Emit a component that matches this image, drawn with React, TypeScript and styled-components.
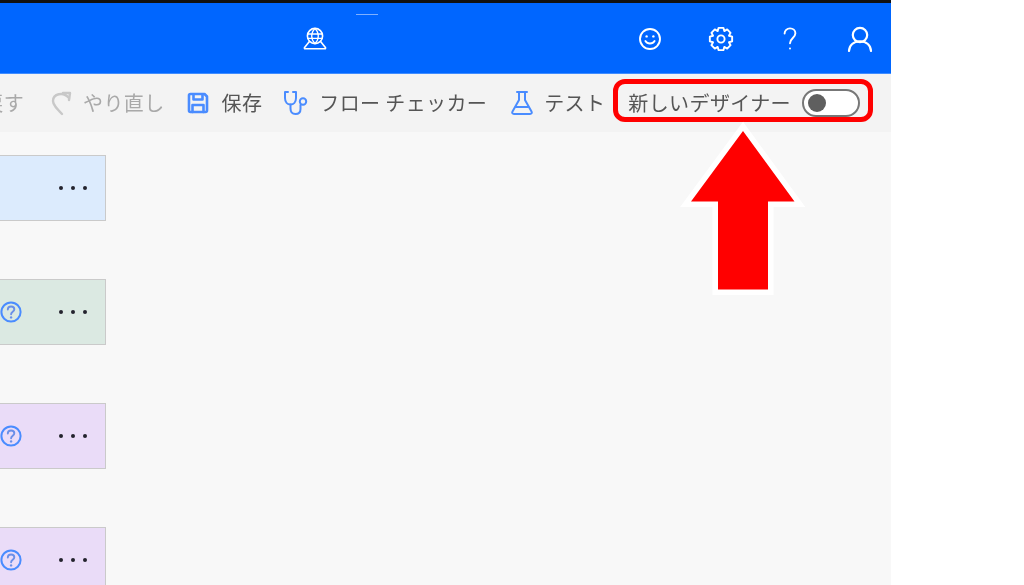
import React from "react";
import styled, { createGlobalStyle } from "styled-components";

const Global = createGlobalStyle`
  html, body { margin: 0; padding: 0; background: #fff; }
  body { font-family: "Noto Sans CJK JP", "Noto Sans", sans-serif; }
`;

const Stage = styled.div`
  position: relative;
  width: 1024px;
  height: 585px;
  overflow: hidden;
  background: #fff;
`;

const Frame = styled.div`
  width: 891px;
  height: 585px;
  display: flex;
  flex-direction: column;
  overflow: hidden;
  background: #f8f8f8;
  filter: blur(0.35px);
`;

const TopEdge = styled.div`
  height: 3px;
  background: #111;
  flex: none;
`;

const Header = styled.header`
  height: 70px;
  flex: none;
  background: #0066ff;
  border-bottom: 1px solid #3f8cff;
  display: grid;
  grid-template-columns: 302px 26px 309px 26px 45px 26px 43px 26px 44px 26px 1fr;
  align-items: center;
  color: #fff;
  position: relative;
`;

const HeaderIcon = styled.svg<{ $col: number }>`
  grid-column: ${(p) => p.$col};
  width: 26px;
  height: 26px;
  fill: none;
  stroke: #fff;
  stroke-width: 1.9;
  stroke-linecap: round;
  stroke-linejoin: round;
  margin-top: 2px;
`;

const TabMark = styled.span`
  position: absolute;
  left: 356px;
  top: 11px;
  width: 22px;
  height: 1px;
  background: #7fb0ff;
`;

const Toolbar = styled.div`
  height: 58px;
  flex: none;
  background: #f3f3f3;
  display: flex;
  justify-content: flex-end;
  align-items: center;
  padding-right: 31px;
  white-space: nowrap;
`;

const Action = styled.div<{ $gap: number; $after: number }>`
  display: flex;
  flex: none;
  align-items: center;
  gap: ${(p) => p.$gap}px;
  margin-right: ${(p) => p.$after}px;
`;

const Label = styled.span<{ $muted?: boolean }>`
  font-size: 20px;
  line-height: 28px;
  letter-spacing: 0.38px;
  color: ${(p) => (p.$muted ? "#a9a9a9" : "#555")};
`;

const ToolIcon = styled.svg<{ $w: number; $h: number; $stroke?: string; $sw?: number }>`
  flex: none;
  width: ${(p) => p.$w}px;
  height: ${(p) => p.$h}px;
  fill: none;
  stroke: ${(p) => p.$stroke ?? "#4a8cff"};
  stroke-width: ${(p) => p.$sw ?? 2};
  stroke-linecap: round;
  stroke-linejoin: round;
`;

const Toggle = styled.span`
  flex: none;
  box-sizing: border-box;
  width: 58px;
  height: 28px;
  border: 2px solid #777;
  border-radius: 14px;
  background: #fff;
  display: flex;
  align-items: center;
  padding-left: 4px;
`;

const Knob = styled.span`
  width: 18px;
  height: 18px;
  border-radius: 50%;
  background: #5f5f5f;
`;

const Canvas = styled.main`
  flex: 1;
  display: flex;
  flex-direction: column;
  gap: 58px;
  padding-top: 23px;
`;

const Card = styled.div<{ $bg: string }>`
  flex: none;
  box-sizing: border-box;
  width: 106px;
  height: 66px;
  background: ${(p) => p.$bg};
  border: 1px solid #cacaca;
  border-left: none;
  display: flex;
  align-items: center;
  justify-content: flex-end;
  padding-right: 18px;
`;

const HelpIcon = styled.svg`
  width: 22px;
  height: 22px;
  margin-right: 37px;
  fill: none;
  flex: none;
`;

const Dots = styled.span`
  display: flex;
  gap: 8px;
`;

const Dot = styled.i`
  width: 4px;
  height: 4px;
  border-radius: 50%;
  background: #23232d;
`;

const Highlight = styled.div`
  position: absolute;
  left: 613px;
  top: 79px;
  width: 260px;
  height: 43px;
  box-sizing: border-box;
  border: 5.5px solid #ff0000;
  border-radius: 12px;
`;

const Arrow = styled.svg`
  position: absolute;
  left: 675px;
  top: 115px;
  width: 140px;
  height: 190px;
`;

const gearPath = (() => {
  const teeth = 8;
  const cx = 13;
  const cy = 13;
  const outer = 11.4;
  const inner = 8.6;
  const pts: string[] = [];
  for (let i = 0; i < teeth; i++) {
    const a = (i / teeth) * Math.PI * 2;
    const step = (Math.PI * 2) / teeth;
    const offsets: [number, number][] = [
      [inner, -0.5],
      [outer, -0.27],
      [outer, 0.27],
      [inner, 0.5],
    ];
    offsets.forEach(([r, k]) => {
      const t = a + k * step;
      pts.push(`${(cx + r * Math.cos(t)).toFixed(2)} ${(cy + r * Math.sin(t)).toFixed(2)}`);
    });
  }
  return `M${pts.join("L")}Z`;
})();

const Help = () => (
  <HelpIcon viewBox="0 0 22 22">
    <circle cx="11" cy="11" r="9.6" stroke="#4a8cff" strokeWidth="2" />
    <path d="M7.800 8.600c0-2 1.500-3.100 3.300-3.100s3.200 1.100 3.200 2.800c0 2.500-3.200 2.400-3.200 5" stroke="#6a8fe8" strokeWidth="1.900" strokeLinecap="round" />
    <circle cx="11.100" cy="16.400" r="1.200" fill="#6a8fe8" />
  </HelpIcon>
);

const More = () => (
  <Dots>
    <Dot />
    <Dot />
    <Dot />
  </Dots>
);

export default function App() {
  return (
    <Stage>
      <Global />
      <Frame>
        <TopEdge />
        <Header>
          <TabMark />
          <HeaderIcon $col={2} viewBox="0 0 26 26">
            <circle cx="13" cy="10" r="7.600" strokeWidth="1.600" />
            <path d="M5.600 8h14.800M5.600 12.400h14.800M13 2.400c-4.400 4.600-4.400 10.600 0 15.200M13 2.400c4.400 4.600 4.400 10.600 0 15.200" strokeWidth="1.300" />
            <path d="M7.400 15.400 2.600 21.500c-.4.600-.2 1.200.6 1.200h19.600c.8 0 1-.6.600-1.200l-4.800-6.100" strokeWidth="1.600" />
          </HeaderIcon>
          <HeaderIcon $col={4} viewBox="0 0 26 26">
            <circle cx="13" cy="13" r="10" />
            <circle cx="9.600" cy="10.400" r="1.200" fill="#fff" stroke="none" />
            <circle cx="16.400" cy="10.400" r="1.200" fill="#fff" stroke="none" />
            <path d="M8.400 15c2 3.400 7.200 3.400 9.200 0" />
          </HeaderIcon>
          <HeaderIcon $col={6} viewBox="0 0 26 26">
            <circle cx="13" cy="13" r="3.600" />
            <path d={gearPath} />
          </HeaderIcon>
          <HeaderIcon $col={8} viewBox="0 0 26 26">
            <path d="M7.600 7.600c0-3 2.400-5.200 5.400-5.200s5.400 2 5.400 4.900c0 4.500-5.400 5-5.400 10" />
            <circle cx="13" cy="22.600" r="1" fill="#fff" stroke="none" />
          </HeaderIcon>
          <HeaderIcon $col={10} viewBox="0 0 26 26">
            <circle cx="13" cy="9" r="7.200" strokeWidth="2.200" />
            <path d="M2 25c.4-5.800 4.500-9.600 11-9.600S23.600 19.200 24 25" strokeWidth="2.200" />
          </HeaderIcon>
        </Header>
        <Toolbar>
          <Action $gap={0} $after={26}>
            <Label $muted>戻す</Label>
          </Action>
          <Action $gap={11} $after={22}>
            <ToolIcon $w={22} $h={26} $stroke="#c8c8c8" $sw={2.4} viewBox="0 0 22 26">
              <path d="M19 8C13 1 3 4 3 11c0 4 4 8 9 13" />
              <path d="M13 3h7l-1 7" />
            </ToolIcon>
            <Label $muted>やり直し</Label>
          </Action>
          <Action $gap={13} $after={21}>
            <ToolIcon $w={22} $h={22} $sw={2.6} viewBox="0 0 22 22">
              <path d="M2 3.500A1.500 1.500 0 0 1 3.500 2h14L20 4.500v14a1.500 1.500 0 0 1-1.500 1.500h-15A1.500 1.500 0 0 1 2 18.500z" />
              <path d="M6.500 2.500v5h9v-5M5.500 20v-7h11v7" />
            </ToolIcon>
            <Label>保存</Label>
          </Action>
          <Action $gap={10} $after={23}>
            <ToolIcon $w={26} $h={26} viewBox="0 0 26 26">
              <path d="M5 2H2v6c0 4 2.500 6.500 5.500 6.500S13 12 13 8V2h-3" />
              <path d="M7.500 14.500v4c0 3.500 2 5.500 5 5.500s5-2 5-5v-4" />
              <circle cx="20" cy="11.500" r="3.200" />
            </ToolIcon>
            <Label>フロー チェッカー</Label>
          </Action>
          <Action $gap={10} $after={23}>
            <ToolIcon $w={24} $h={26} viewBox="0 0 24 26">
              <path d="M7 2h10M9 2v8L2.500 21.500c-.8 1.500 0 2.500 1.500 2.500h16c1.500 0 2.300-1 1.500-2.500L15 10V2" />
              <path d="M6 17h12" />
            </ToolIcon>
            <Label>テスト</Label>
          </Action>
          <Action $gap={11} $after={0}>
            <Label>新しいデザイナー</Label>
            <Toggle>
              <Knob />
            </Toggle>
          </Action>
        </Toolbar>
        <Canvas>
          <Card $bg="#dcebfd">
            <More />
          </Card>
          <Card $bg="#dbe9e2">
            <Help />
            <More />
          </Card>
          <Card $bg="#eadcf8">
            <Help />
            <More />
          </Card>
          <Card $bg="#eadcf8">
            <Help />
            <More />
          </Card>
        </Canvas>
      </Frame>
      <Highlight />
      <Arrow viewBox="0 0 140 190">
        <path
          d="M68 16 16 86.500h27v88h50v-88h26.500z"
          fill="#ff0000"
          stroke="#fff"
          strokeWidth="11"
          strokeLinejoin="miter"
          paintOrder="stroke"
        />
      </Arrow>
    </Stage>
  );
}
